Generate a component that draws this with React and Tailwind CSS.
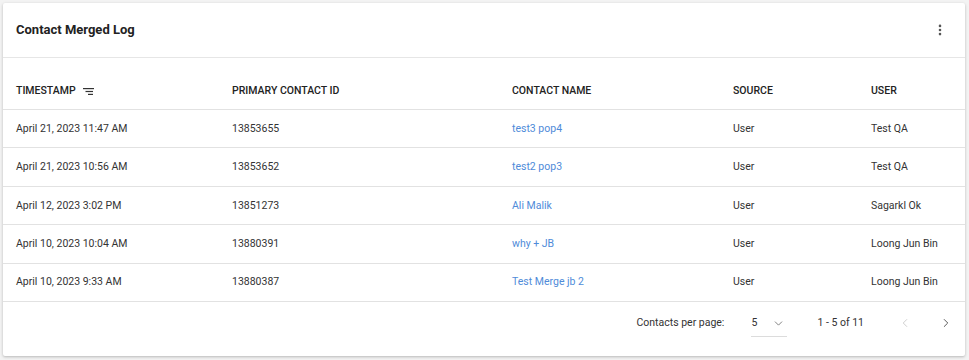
import { MoreVertical, ChevronDown, ChevronLeft, ChevronRight } from "lucide-react";

const rows = [
  { ts: "April 21, 2023 11:47 AM", id: "13853655", name: "test3 pop4", source: "User", user: "Test QA" },
  { ts: "April 21, 2023 10:56 AM", id: "13853652", name: "test2 pop3", source: "User", user: "Test QA" },
  { ts: "April 12, 2023 3:02 PM", id: "13851273", name: "Ali Malik", source: "User", user: "Sagarkl Ok" },
  { ts: "April 10, 2023 10:04 AM", id: "13880391", name: "why + JB", source: "User", user: "Loong Jun Bin" },
  { ts: "April 10, 2023 9:33 AM", id: "13880387", name: "Test Merge jb 2", source: "User", user: "Loong Jun Bin" },
];

const cols = "grid grid-cols-[216px_280px_221px_138px_1fr] pl-[13px]";

function SortIcon() {
  return (
    <svg width="11" height="7" viewBox="0 0 11 7" className="ml-[7px]">
      <rect x="0" y="0" width="11" height="1.2" fill="#333" />
      <rect x="2.5" y="2.9" width="7.5" height="1.2" fill="#333" />
      <rect x="5" y="5.8" width="5" height="1.2" fill="#333" />
    </svg>
  );
}

export default function App() {
  return (
    <div className="min-h-screen bg-[#f3f3f3] p-[3px] font-['Roboto',sans-serif] text-[10.5px] text-[#333]">
      <div className="w-[962px] bg-white rounded-[2px] shadow-[0_1px_3px_rgba(0,0,0,0.25)]">
        {/* header */}
        <div className="h-[55px] flex items-center justify-between pl-[13px] pr-[18px] border-b border-[#e6e6e6]">
          <h1 className="text-[13px] font-bold text-[#222]">Contact Merged Log</h1>
          <MoreVertical className="w-[14px] h-[14px] text-[#555]" strokeWidth={2.5} />
        </div>

        {/* table head */}
        <div className={`${cols} h-[52px] items-end pb-[10px] border-b border-[#e2e2e2] font-medium text-[#222]`}>
          <div className="flex items-center">TIMESTAMP <SortIcon /></div>
          <div>PRIMARY CONTACT ID</div>
          <div>CONTACT NAME</div>
          <div>SOURCE</div>
          <div>USER</div>
        </div>

        {/* rows */}
        {rows.map((r, i) => (
          <div key={i} className={`${cols} h-[38.4px] items-center border-b border-[#e2e2e2]`}>
            <div>{r.ts}</div>
            <div>{r.id}</div>
            <div className="text-[#4f8bd9]">{r.name}</div>
            <div>{r.source}</div>
            <div>{r.user}</div>
          </div>
        ))}

        {/* footer */}
        <div className="h-[54px] flex items-start justify-end pt-[14px] pr-[12px]">
          <span className="leading-[14px]">Contacts per page:</span>
          <div className="ml-[27px] w-[36px] h-[21px] flex items-start justify-between border-b border-[#dcdcdc]">
            <span className="leading-[14px]">5</span>
            <ChevronDown className="w-[13px] h-[13px] text-[#666] mr-[2px] mt-[1px]" strokeWidth={1.5} />
          </div>
          <span className="ml-[30px] leading-[14px]">1 - 5 of 11</span>
          <ChevronLeft className="ml-[34px] w-[14px] h-[14px] text-[#c8c8c8]" strokeWidth={1.5} />
          <ChevronRight className="ml-[27px] w-[14px] h-[14px] text-[#444]" strokeWidth={1.5} />
        </div>
      </div>
    </div>
  );
}
